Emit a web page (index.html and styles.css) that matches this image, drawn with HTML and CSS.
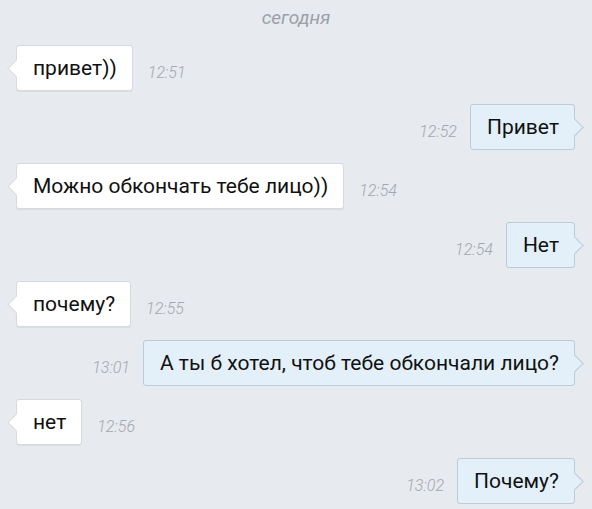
FILE: index.html
```html
<!DOCTYPE html>
<html lang="ru">
  <head>
    <meta charset="UTF-8" />
    <meta name="viewport" content="width=device-width, initial-scale=1.0" />
    <title>Диалог</title>
    <link rel="stylesheet" href="styles.css">
  </head>
  <body>
    <div class="chat">
      <div class="day">сегодня</div>

      <div class="messages">
        <div class="msg in">
          <div class="bubble">привет))</div>
          <span class="time">12:51</span>
        </div>

        <div class="msg out">
          <span class="time">12:52</span>
          <div class="bubble">Привет</div>
        </div>

        <div class="msg in">
          <div class="bubble">Можно обкончать тебе лицо))</div>
          <span class="time">12:54</span>
        </div>

        <div class="msg out">
          <span class="time">12:54</span>
          <div class="bubble">Нет</div>
        </div>

        <div class="msg in">
          <div class="bubble">почему?</div>
          <span class="time">12:55</span>
        </div>

        <div class="msg out">
          <span class="time">13:01</span>
          <div class="bubble">А ты б хотел, чтоб тебе обкончали лицо?</div>
        </div>

        <div class="msg in">
          <div class="bubble">нет</div>
          <span class="time">12:56</span>
        </div>

        <div class="msg out">
          <span class="time">13:02</span>
          <div class="bubble">Почему?</div>
        </div>
      </div>
    </div>
  </body>
</html>
```

FILE: styles.css
```css
body {
  font-family: Roboto, "Noto Sans", sans-serif;
  background-color: #e7eaee;
  margin: 0;
  padding: 0;
}

.chat {
  padding: 5px 0 0;
}

.day {
  text-align: center;
  font-size: 19px;
  line-height: 25px;
  font-style: italic;
  color: #9ba1a9;
  margin-bottom: 15px;
}

.messages {
  display: flex;
  flex-direction: column;
  gap: 13px;
}

.msg {
  display: flex;
  align-items: center;
}

.msg.in {
  justify-content: flex-start;
  padding-left: 16px;
}

.msg.out {
  justify-content: flex-end;
  padding-right: 17px;
}

.bubble {
  position: relative;
  font-size: 21px;
  line-height: 24px;
  color: #111;
  padding: 10px 15px 10px 16px;
  border-radius: 3px;
}

.bubble::before {
  content: "";
  position: absolute;
  top: 50%;
  width: 12px;
  height: 12px;
  margin-top: -6px;
  transform: rotate(45deg);
}

.msg.in .bubble {
  background: #fff;
  border: 1px solid #d6dade;
  box-shadow: 0 1px 1px rgba(0, 0, 0, 0.06);
}

.msg.in .bubble::before {
  left: -7px;
  background: #fff;
  border-left: 1px solid #d6dade;
  border-bottom: 1px solid #d6dade;
}

.msg.out .bubble {
  background: #e3f0fa;
  border: 1px solid #bccbd8;
}

.msg.out .bubble::before {
  right: -7px;
  background: #e3f0fa;
  border-right: 1px solid #bccbd8;
  border-top: 1px solid #bccbd8;
}

.time {
  font-size: 16px;
  font-style: italic;
  font-weight: 300;
  color: #a3a8ae;
  padding-top: 9px;
}

.msg.in .time {
  margin-left: 15px;
}

.msg.out .time {
  margin-right: 13px;
}
```
